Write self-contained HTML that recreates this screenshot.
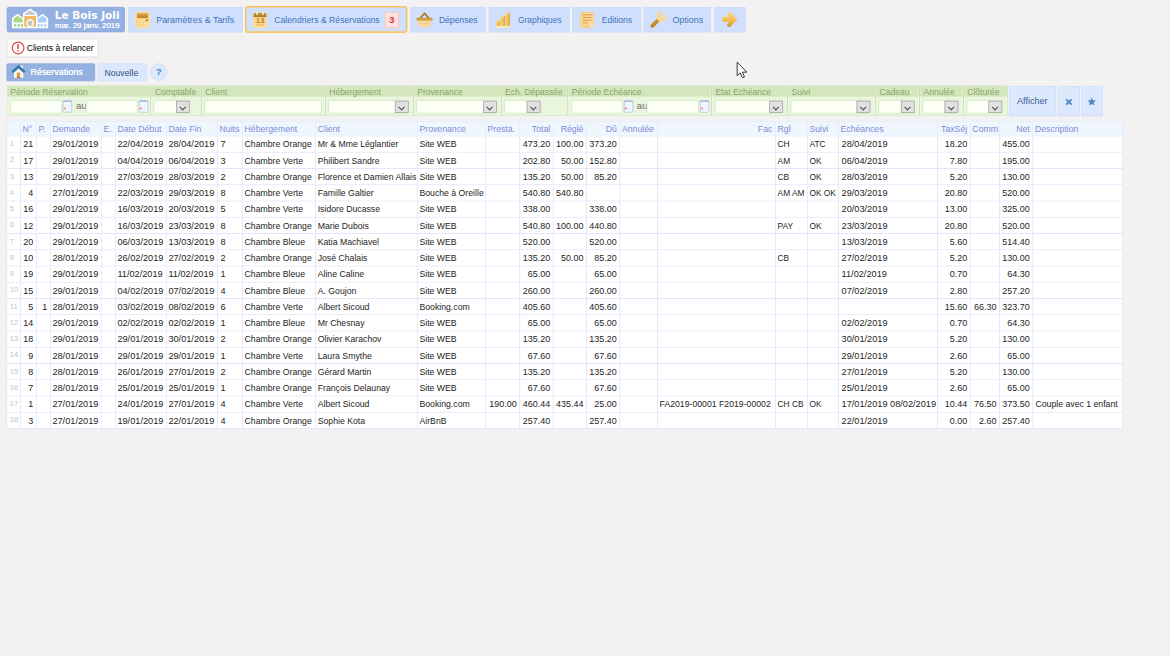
<!DOCTYPE html>
<html lang="fr"><head><meta charset="utf-8"><title>Le Bois Joli - Réservations</title>
<style>
html,body{margin:0;padding:0;width:1170px;height:656px;overflow:hidden}
body{width:1170px;height:656px;overflow:hidden;background:#f3f1f1;font-family:"Liberation Sans",sans-serif;font-size:10.6px;color:#000}
#w{position:absolute;left:0;top:0;width:5760px;height:3228px;transform:scale(0.203125);transform-origin:0 0;background:#f3f1f1}
#z{position:absolute;left:0;top:0;width:5760px;height:3228px}
.a{position:absolute;box-sizing:border-box;white-space:nowrap}
.tb{top:35px;height:124px;background:#d0e0fc;border:4px solid #cadcfa;color:#4272ba;font-size:43.8px;line-height:113.6px}
.tb span{position:absolute;top:3.2px}
.ic{position:absolute;overflow:visible}
.tb .ic{margin-top:-2.6px}
.sel .ic{margin-top:0}
.logo{left:33.2px;top:33.6px;width:582px;height:125.6px;background:#95b1e2;border:4px solid #88a6dc;border-radius:10px;color:#fff}
.sel{border:8px solid #f9c362;border-radius:16px;top:29.2px;height:133.2px;line-height:116.8px}
.fl{top:426.8px;height:56px;line-height:56px;color:#88a468;font-size:42px}
.in{top:492px;height:68px;background:#fbfff6;border:4px solid #d0e7ba;border-radius:12px}
.cb{top:492px;height:68px;background:#fbfff6;border:4px solid #d0e7ba;border-radius:12px}
.cb i{position:absolute;right:-4px;top:0;width:68px;height:60px;box-sizing:border-box;background:#e1e1e1;border:4px solid #a9a9a9}
.cb i:after{content:"";position:absolute;left:17.2px;top:15.6px;width:18.4px;height:18.4px;border-right:5.2px solid #484848;border-bottom:5.2px solid #484848;transform:rotate(45deg)}
.dv{top:424px;width:4px;height:144px;background:#c7ddb2;box-shadow:-4px 0 0 rgba(255,255,255,.3),4px 0 0 rgba(255,255,255,.3)}
.au{top:486.4px;height:68px;line-height:68px;color:#6e686e;font-size:47.2px}
.rb{top:424px;height:148px;background:#dce8fc;border:4px solid #cfe0f8;color:#3a5a94;line-height:140px;text-align:center;font-size:43.2px}
table{position:absolute;left:32px;top:596px;width:5497px;border-collapse:separate;border-spacing:0;table-layout:fixed;border-left:4px solid #e0e0fa;border-top:4px solid #e3edfb}
td,th{box-sizing:border-box;padding:0 12px 0 8px;border-right:4px solid #e0e0fa;border-bottom:4px solid #e0e0fa;overflow:hidden;white-space:nowrap;font-weight:normal;text-align:left}
th{height:72px;background:#f0f6fe;color:#7d8cd6;border-bottom-color:#e2eefb;border-right-color:#e2e9fb;font-size:42.8px;line-height:68px}
td{height:80px;background:#fff;font-size:42.8px;line-height:68px;padding-top:4.8px;vertical-align:top;color:#242424}
td.r,th.r{text-align:right;padding-right:13.6px}
td.r{font-size:44.2px}td.d{font-size:45.2px}
td:nth-child(8){padding-left:12px}td:nth-child(20){padding-left:13.2px}td:nth-child(24){padding-left:10.8px}td:nth-child(18),td:nth-child(19){font-size:41.2px}
td.i{color:#c4c4c4;font-size:38px;line-height:60px;vertical-align:top;padding-left:12px;padding-top:4px}
</style></head><body><div id="w"><div id="z">

<div class="a logo">
<svg class="ic" style="left:20px;top:3.6px" width="184" height="100" viewBox="0 0 46 25">
<path d="M0.5 24.5V12L7.5 6.8L14 11.6V6L22.8 0.3L31.6 6V11.6L38 6.8L45 12V24.5Z" fill="#fff"/>
<path d="M2.6 12.6L7.5 9.2L13.6 13V17.4H2.6Z" fill="#a6d886"/>
<path d="M3.2 19.4h2.6v3.2H3.2zM7.6 19.4h2.6v3.2H7.6zM11.6 19.4h2.4v3.2h-2.4z" fill="#a6d886"/>
<path d="M16 7L22.8 2.4L29.6 7V8H16Z" fill="#c9c9c9"/>
<path d="M15.6 9.6H30v13H15.6z" fill="#f0b85e"/>
<ellipse cx="22.8" cy="18" rx="4.7" ry="5" fill="#fff"/>
<ellipse cx="22.8" cy="18.2" rx="2.9" ry="3.5" fill="#c4c4c4"/>
<path d="M32 13L38 9.2L43 12.6V17.4H32Z" fill="#a9cdfc"/>
<path d="M32 19.4h2.4v3.2H32zM35.8 19.4h2.6v3.2h-2.6zM40.2 19.4h2.6v3.2h-2.6z" fill="#a9cdfc"/>
</svg>
<div class="a" style="left:232px;top:6.4px;font-family:'DejaVu Sans','Liberation Sans',sans-serif;font-weight:bold;font-size:52px;line-height:60px;letter-spacing:0">Le Bois Joli</div>
<div class="a" style="left:234px;top:66px;font-size:39px;line-height:44px;text-shadow:0 0 2.4px #fff;">mar. 29 janv. 2019</div>
</div>
<div class="a tb " style="left:630.8px;width:565.2px"><svg class="ic" style="left:28px;top:20px" width="80" height="84" viewBox="0 0 20 21">
<defs><linearGradient id="g1" x1="0" y1="0" x2="0" y2="1"><stop offset="0" stop-color="#dcaa54"/><stop offset="1" stop-color="#b6822c"/></linearGradient></defs>
<rect x="1.3" y="0.8" width="17" height="19.4" rx="3" fill="#fbd27e" stroke="#fde2a8" stroke-width="1"/>
<rect x="3" y="2.4" width="13.6" height="5.6" rx="1.4" fill="url(#g1)"/>
<g fill="#fdebc2"><rect x="4" y="9.8" width="2" height="2"/><rect x="7.6" y="9.8" width="2" height="2"/><rect x="11.2" y="9.8" width="2" height="2"/>
<rect x="4" y="13.2" width="2" height="2"/><rect x="7.6" y="13.2" width="2" height="2"/><rect x="11.2" y="13.2" width="2" height="2"/><rect x="14.4" y="13.2" width="2" height="2"/>
<rect x="4" y="16.6" width="2" height="2"/><rect x="7.6" y="16.6" width="2" height="2"/><rect x="11.2" y="16.6" width="2" height="2"/><rect x="14.4" y="16.6" width="2" height="2"/></g>
<rect x="13.4" y="9.6" width="3" height="2.4" rx="0.8" fill="#b98630"/>
</svg><span style="left:134.4px">Paramètres &amp; Tarifs</span></div>
<div class="a tb sel" style="left:1206.4px;width:800px"><svg class="ic" style="left:24px;top:16px" width="80" height="88" viewBox="0 0 20 22">
<rect x="2.4" y="2.6" width="16.2" height="18.2" rx="2.6" fill="#fcd88c" stroke="#fde4b0" stroke-width="0.8"/>
<path d="M2.4 7.2V5.2Q2.4 2.6 5 2.6H16Q18.6 2.6 18.6 5.2V7.2Z" fill="#b98a30"/>
<rect x="2.4" y="6.2" width="16.2" height="1.5" fill="#a87a24"/>
<rect x="5.6" y="0.6" width="2.4" height="4.6" rx="1.1" fill="#fde6b4"/><rect x="13" y="0.6" width="2.4" height="4.6" rx="1.1" fill="#fde6b4"/>
<text x="5.5" y="15.5" font-family="Liberation Sans,sans-serif" font-weight="bold" font-size="8.6" fill="#b07c22" letter-spacing="0.9">13</text>
<rect x="5.6" y="16.8" width="10" height="1.2" fill="#e2b866"/>
</svg><span style="left:136px;font-size:42.6px">Calendriers &amp; Réservations</span><b class="a" style="left:678.4px;top:21.2px;width:72px;height:80px;background:#fde0e0;border:4px solid #f6c0b8;border-radius:8px;color:#e03232;font-weight:bold;font-size:46px;line-height:72px;text-align:center">3</b></div>
<div class="a tb " style="left:2020px;width:372px"><svg class="ic" style="left:22px;top:21.6px" width="88" height="80" viewBox="0 0 22 20">
<path d="M5 8.6L11 2L17 8.6" fill="none" stroke="#a87422" stroke-width="2.1" stroke-linejoin="round" stroke-linecap="round"/>
<path d="M2.4 10.6H19.6L18.2 17.6Q18 19 16.6 19H5.4Q4 19 3.8 17.6Z" fill="#f9d69c"/>
<rect x="1" y="7.4" width="20" height="3.6" rx="1.8" fill="#c9983c"/>
<rect x="2.4" y="9.6" width="17.2" height="1.4" fill="#e2b662"/>
<rect x="4.4" y="13.8" width="13.2" height="0.9" fill="#f4c886"/>
</svg><span style="left:136.8px;font-size:42.2px">Dépenses</span></div>
<div class="a tb " style="left:2406.4px;width:397.6px"><svg class="ic" style="left:28px;top:24px" width="80" height="80" viewBox="0 0 20 20">
<defs><linearGradient id="g2" x1="0" y1="0" x2="1" y2="0"><stop offset="0" stop-color="#fbd070"/><stop offset="0.6" stop-color="#f4bc50"/><stop offset="1" stop-color="#d89c30"/></linearGradient></defs>
<rect x="0.4" y="16.6" width="18.6" height="2.4" fill="#fcecb0"/>
<rect x="1" y="10" width="5.2" height="7" rx="1.6" fill="url(#g2)"/>
<rect x="6.8" y="4.6" width="5.2" height="12.4" rx="1.6" fill="url(#g2)"/>
<rect x="12.6" y="0.4" width="5.4" height="16.6" rx="1.6" fill="url(#g2)"/>
<rect x="13.6" y="1" width="3.4" height="1.8" rx="0.9" fill="#fde4a0"/>
<rect x="7.8" y="5.2" width="3.2" height="1.6" rx="0.8" fill="#fde4a0"/>
<rect x="2" y="10.6" width="3.2" height="1.6" rx="0.8" fill="#fde4a0"/>
</svg><span style="left:139.2px;font-size:41.8px">Graphiques</span></div>
<div class="a tb " style="left:2816px;width:340px"><svg class="ic" style="left:32px;top:20px" width="80" height="84" viewBox="0 0 20 21">
<path d="M4 1.2H15.2Q17.4 1.2 17.4 3.4V16.8L14.2 20.2H4Q1.8 20.2 1.8 18V3.4Q1.8 1.2 4 1.2Z" fill="#fcdaa0" stroke="#f8c674" stroke-width="1"/>
<path d="M14.2 20.2V18Q14.2 16.8 15.6 16.8H17.4Z" fill="#fff4dc"/>
<g fill="#dca648"><rect x="3.8" y="3.4" width="11.4" height="1.5"/><rect x="3.8" y="6.8" width="11.4" height="1.5"/><rect x="3.8" y="10.2" width="11.4" height="1.5"/><rect x="3.8" y="13.4" width="6.6" height="1.5"/></g>
<rect x="3.8" y="17.2" width="9" height="1.2" fill="#f6c87a"/>
</svg><span style="left:142.4px;font-size:42px">Editions</span></div>
<div class="a tb " style="left:3168px;width:332px"><svg class="ic" style="left:0;top:0" width="144" height="120" viewBox="0 0 36 30">
<path d="M9.9 22.9L16.6 16.2" stroke="#be8822" stroke-width="4.6" stroke-linecap="round"/>
<path d="M11 21.6L15.4 17.2" stroke="#cf9a34" stroke-width="1.2" stroke-linecap="round"/>
<path d="M15.4 14.8L18 17.4L20 15.4L17.4 12.8Z" fill="#f6cc80"/>
<circle cx="20.9" cy="11.6" r="5.9" fill="#fbd68e"/>
<rect x="-1.9" y="-9.5" width="3.8" height="10.3" rx="1.7" transform="translate(21.1,11.4) rotate(45)" fill="#d0e0fc"/>
</svg><span style="left:138.4px">Options</span></div>
<div class="a tb " style="left:3516px;width:154px"><svg class="ic" style="left:32px;top:21.6px" width="80" height="80" viewBox="0 0 20 20">
<defs><linearGradient id="g3" x1="0" y1="0" x2="0" y2="1"><stop offset="0" stop-color="#fbd47c"/><stop offset="0.5" stop-color="#f5c258"/><stop offset="1" stop-color="#d2962a"/></linearGradient></defs>
<path d="M10.8 1.2Q9.2 -0.4 7.6 1.2T7.6 4.4L9.2 6H3.2Q0.6 6 0.6 9.3T3.2 12.6H9.2L7.4 14.6Q5.8 16.4 7.6 18T11 18L18.6 10.4Q19.6 9.3 18.6 8.2Z" fill="url(#g3)"/>
</svg><span style="left:0px"></span></div>
<svg class="ic" style="left:3625.2px;top:301.6px" width="60" height="92" viewBox="0 0 15 23"><path d="M1 1V17.6L4.8 14.2L7.5 20.2L10 19.2L7.4 13.3H12.9Z" fill="#fff" stroke="#222" stroke-width="1.1" stroke-linejoin="miter"/></svg>
<div class="a" style="left:32.8px;top:189.6px;width:452px;height:92px;background:#fff;border:4px solid #dfdddd;border-radius:8px;font-size:42.4px;line-height:80px">
<svg class="ic" style="left:18.4px;top:8.8px" width="68" height="68" viewBox="0 0 17 17"><circle cx="8.5" cy="8.5" r="7.2" fill="#fff" stroke="#de4a44" stroke-width="1.5"/><rect x="7.5" y="3.8" width="2" height="6" rx="0.6" fill="#de4a44"/><rect x="7.5" y="11" width="2" height="2" rx="0.6" fill="#de4a44"/></svg>
<span class="a" style="left:94.8px;top:5.6px">Clients à relancer</span></div>
<div class="a" style="left:32px;top:312px;width:436px;height:88px;background:#95b1e2;border:4px solid #8aa8de;border-radius:8px;color:#fff;font-size:44px;line-height:80px;text-shadow:0 0 2px #fff">
<svg class="ic" style="left:20px;top:4px" width="72" height="68" viewBox="0 0 18 17">
<rect x="11.6" y="0.6" width="2.6" height="4" fill="#f4f4f4"/>
<path d="M3.2 8.4L8.8 3.4L14.8 8.4V15.8H3.2Z" fill="#f6f6f4"/>
<path d="M0.6 7.6L8.8 0.4L17 7.6L15.4 9.5L8.8 4L2.2 9.5Z" fill="#2e7eb8" stroke="#2c4868" stroke-width="0.5"/>
<rect x="6.8" y="9.4" width="4" height="6.4" fill="#d89a28"/><rect x="6.8" y="15" width="4" height="0.9" fill="#d04028"/>
</svg>
<span class="a" style="left:114px;top:0px">Réservations</span></div>
<div class="a" style="left:480px;top:312px;width:244px;height:88px;background:#dce8fc;border:4px solid #cfe0f8;border-radius:8px;color:#31507f;font-size:42.8px;line-height:88px"><span class="a" style="left:30px;top:0px">Nouvelle</span></div>
<div class="a" style="left:738px;top:312px;width:86px;height:86px;background:#dce8fc;border:4px solid #cbdcf6;border-radius:44px;color:#4a82c4;font-weight:bold;font-size:48px;line-height:76px;text-align:center">?</div>
<div class="a" style="left:32px;top:420px;width:4930px;height:152px;background:#e9f5dd;border:4px solid #cfe4ba;border-top-color:#c4dab2;border-radius:8px"></div>
<div class="a" style="left:36px;top:424px;width:4922px;height:49.6px;background:#d4e7bc;border-bottom:4px solid #c9e0b0"></div>
<div class="a dv" style="left:738.4px"></div>
<div class="a dv" style="left:988.8px"></div>
<div class="a dv" style="left:1600.4px"></div>
<div class="a dv" style="left:2033.2px"></div>
<div class="a dv" style="left:2465.6px"></div>
<div class="a dv" style="left:2792.8px"></div>
<div class="a dv" style="left:3500.4px"></div>
<div class="a dv" style="left:3874.8px"></div>
<div class="a dv" style="left:4308.8px"></div>
<div class="a dv" style="left:4525.2px"></div>
<div class="a dv" style="left:4741.2px"></div>
<div class="a fl" style="left:51.6px">Période Réservation</div>
<div class="a fl" style="left:762.8px">Comptable</div>
<div class="a fl" style="left:1010.8px">Client</div>
<div class="a fl" style="left:1620.8px">Hébergement</div>
<div class="a fl" style="left:2054.4px">Provenance</div>
<div class="a fl" style="left:2486px">Ech. Dépassée</div>
<div class="a fl" style="left:2815.2px">Période Echéance</div>
<div class="a fl" style="left:3522px">Etat Echéance</div>
<div class="a fl" style="left:3897.2px">Suivi</div>
<div class="a fl" style="left:4330px">Cadeau</div>
<div class="a fl" style="left:4546.4px">Annulée</div>
<div class="a fl" style="left:4762px">Clôturée</div>
<div class="a in" style="left:50.8px;width:256px"></div>
<svg class="ic" style="left:308.2px;top:492px" width="48" height="64" viewBox="0 0 12 16"><rect x="0.6" y="0.8" width="10.6" height="14.2" rx="0.8" fill="#fff" stroke="#aec6ea" stroke-width="1.1"/><rect x="0.6" y="0.8" width="10.6" height="2" fill="#a9c3e8"/><path d="M4.1 3.4V14.6M7.6 3.4V14.6M1 6.2H11M1 9H11M1 11.8H11" stroke="#dde6f4" stroke-width="0.8"/><rect x="1.4" y="9.2" width="2.4" height="2.4" fill="#f2907c"/></svg>
<div class="a au" style="left:373.68px">au</div>
<div class="a in" style="left:422px;width:255.6px"></div>
<svg class="ic" style="left:683.32px;top:492px" width="48" height="64" viewBox="0 0 12 16"><rect x="0.6" y="0.8" width="10.6" height="14.2" rx="0.8" fill="#fff" stroke="#aec6ea" stroke-width="1.1"/><rect x="0.6" y="0.8" width="10.6" height="2" fill="#a9c3e8"/><path d="M4.1 3.4V14.6M7.6 3.4V14.6M1 6.2H11M1 9H11M1 11.8H11" stroke="#dde6f4" stroke-width="0.8"/><rect x="1.4" y="9.2" width="2.4" height="2.4" fill="#f2907c"/></svg>
<div class="a cb" style="left:755.6px;width:179.6px"><i></i></div>
<div class="a in" style="left:1005.6px;width:579.6px"></div>
<div class="a cb" style="left:1614.8px;width:396.8px"><i></i></div>
<div class="a cb" style="left:2048.4px;width:397.2px"><i></i></div>
<div class="a cb" style="left:2481.2px;width:180px"><i></i></div>
<div class="a in" style="left:2812px;width:256.4px"></div>
<svg class="ic" style="left:3070.52px;top:492px" width="48" height="64" viewBox="0 0 12 16"><rect x="0.6" y="0.8" width="10.6" height="14.2" rx="0.8" fill="#fff" stroke="#aec6ea" stroke-width="1.1"/><rect x="0.6" y="0.8" width="10.6" height="2" fill="#a9c3e8"/><path d="M4.1 3.4V14.6M7.6 3.4V14.6M1 6.2H11M1 9H11M1 11.8H11" stroke="#dde6f4" stroke-width="0.8"/><rect x="1.4" y="9.2" width="2.4" height="2.4" fill="#f2907c"/></svg>
<div class="a au" style="left:3135px">au</div>
<div class="a in" style="left:3183.2px;width:257.6px"></div>
<svg class="ic" style="left:3445.16px;top:492px" width="48" height="64" viewBox="0 0 12 16"><rect x="0.6" y="0.8" width="10.6" height="14.2" rx="0.8" fill="#fff" stroke="#aec6ea" stroke-width="1.1"/><rect x="0.6" y="0.8" width="10.6" height="2" fill="#a9c3e8"/><path d="M4.1 3.4V14.6M7.6 3.4V14.6M1 6.2H11M1 9H11M1 11.8H11" stroke="#dde6f4" stroke-width="0.8"/><rect x="1.4" y="9.2" width="2.4" height="2.4" fill="#f2907c"/></svg>
<div class="a cb" style="left:3518px;width:336.8px"><i></i></div>
<div class="a cb" style="left:3891.6px;width:393.2px"><i></i></div>
<div class="a cb" style="left:4324px;width:178.8px"><i></i></div>
<div class="a cb" style="left:4541.2px;width:176.8px"><i></i></div>
<div class="a cb" style="left:4758px;width:175.6px"><i></i></div>
<div class="a rb" style="left:4968px;width:232px;font-size:44.4px;text-indent:-4px">Afficher</div>
<div class="a rb" style="left:5210px;width:106px"><svg class="ic" style="left:32px;top:58px" width="32" height="32" viewBox="0 0 8 8"><path d="M1.3 1.5L6.7 6.5M6.7 1.5L1.3 6.5" stroke="#4f88c8" stroke-width="2.3" stroke-linecap="round"/></svg></div>
<div class="a rb" style="left:5324px;width:104px"><svg class="ic" style="left:26.4px;top:51.2px" width="41.6" height="41.6" viewBox="0 0 11 11"><path d="M5.5 0.3L7.1 3.8L10.9 4.2L8.1 6.8L8.9 10.6L5.5 8.6L2.1 10.6L2.9 6.8L0.1 4.2L3.9 3.8Z" fill="#4f88c8"/></svg></div>
<table><colgroup>
<col style="width:67px">
<col style="width:78px">
<col style="width:69px">
<col style="width:251px">
<col style="width:69px">
<col style="width:251px">
<col style="width:252px">
<col style="width:123px">
<col style="width:360px">
<col style="width:501px">
<col style="width:335px">
<col style="width:169px">
<col style="width:165px">
<col style="width:164px">
<col style="width:164px">
<col style="width:185px">
<col style="width:581px">
<col style="width:157px">
<col style="width:153px">
<col style="width:488px">
<col style="width:161px">
<col style="width:144px">
<col style="width:164px">
<col style="width:442px">
</colgroup><thead><tr>
<th class="i"></th>
<th class="t">N°</th>
<th class="t">P.</th>
<th class="t">Demande</th>
<th class="t">E.</th>
<th class="t">Date Début</th>
<th class="t">Date Fin</th>
<th class="t">Nuits</th>
<th class="t">Hébergement</th>
<th class="t">Client</th>
<th class="t">Provenance</th>
<th class="t">Presta.</th>
<th class="r">Total</th>
<th class="r">Réglé</th>
<th class="r">Dû</th>
<th class="t">Annulée</th>
<th class="r">Fac</th>
<th class="t">Rgl</th>
<th class="t">Suivi</th>
<th class="t">Echéances</th>
<th class="r">TaxSéj</th>
<th class="t">Comm</th>
<th class="r">Net</th>
<th class="t">Description</th>
</tr></thead><tbody>
<tr><td class="i">1</td><td class="r">21</td><td class="r"></td><td class="d">29/01/2019</td><td class="t"></td><td class="d">22/04/2019</td><td class="d">28/04/2019</td><td class="d">7</td><td class="t">Chambre Orange</td><td class="t">Mr &amp; Mme Léglantier</td><td class="t">Site WEB</td><td class="r"></td><td class="r">473.20</td><td class="r">100.00</td><td class="r">373.20</td><td class="t"></td><td class="t"></td><td class="t">CH</td><td class="t">ATC</td><td class="d">28/04/2019</td><td class="r">18.20</td><td class="r"></td><td class="r">455.00</td><td class="t"></td></tr>
<tr><td class="i">2</td><td class="r">17</td><td class="r"></td><td class="d">29/01/2019</td><td class="t"></td><td class="d">04/04/2019</td><td class="d">06/04/2019</td><td class="d">3</td><td class="t">Chambre Verte</td><td class="t">Philibert Sandre</td><td class="t">Site WEB</td><td class="r"></td><td class="r">202.80</td><td class="r">50.00</td><td class="r">152.80</td><td class="t"></td><td class="t"></td><td class="t">AM</td><td class="t">OK</td><td class="d">06/04/2019</td><td class="r">7.80</td><td class="r"></td><td class="r">195.00</td><td class="t"></td></tr>
<tr><td class="i">3</td><td class="r">13</td><td class="r"></td><td class="d">29/01/2019</td><td class="t"></td><td class="d">27/03/2019</td><td class="d">28/03/2019</td><td class="d">2</td><td class="t">Chambre Orange</td><td class="t">Florence et Damien Allais</td><td class="t">Site WEB</td><td class="r"></td><td class="r">135.20</td><td class="r">50.00</td><td class="r">85.20</td><td class="t"></td><td class="t"></td><td class="t">CB</td><td class="t">OK</td><td class="d">28/03/2019</td><td class="r">5.20</td><td class="r"></td><td class="r">130.00</td><td class="t"></td></tr>
<tr><td class="i">4</td><td class="r">4</td><td class="r"></td><td class="d">27/01/2019</td><td class="t"></td><td class="d">22/03/2019</td><td class="d">29/03/2019</td><td class="d">8</td><td class="t">Chambre Verte</td><td class="t">Famille Galtier</td><td class="t">Bouche à Oreille</td><td class="r"></td><td class="r">540.80</td><td class="r">540.80</td><td class="r"></td><td class="t"></td><td class="t"></td><td class="t">AM AM</td><td class="t">OK OK</td><td class="d">29/03/2019</td><td class="r">20.80</td><td class="r"></td><td class="r">520.00</td><td class="t"></td></tr>
<tr><td class="i">5</td><td class="r">16</td><td class="r"></td><td class="d">29/01/2019</td><td class="t"></td><td class="d">16/03/2019</td><td class="d">20/03/2019</td><td class="d">5</td><td class="t">Chambre Verte</td><td class="t">Isidore Ducasse</td><td class="t">Site WEB</td><td class="r"></td><td class="r">338.00</td><td class="r"></td><td class="r">338.00</td><td class="t"></td><td class="t"></td><td class="t"></td><td class="t"></td><td class="d">20/03/2019</td><td class="r">13.00</td><td class="r"></td><td class="r">325.00</td><td class="t"></td></tr>
<tr><td class="i">6</td><td class="r">12</td><td class="r"></td><td class="d">29/01/2019</td><td class="t"></td><td class="d">16/03/2019</td><td class="d">23/03/2019</td><td class="d">8</td><td class="t">Chambre Orange</td><td class="t">Marie Dubois</td><td class="t">Site WEB</td><td class="r"></td><td class="r">540.80</td><td class="r">100.00</td><td class="r">440.80</td><td class="t"></td><td class="t"></td><td class="t">PAY</td><td class="t">OK</td><td class="d">23/03/2019</td><td class="r">20.80</td><td class="r"></td><td class="r">520.00</td><td class="t"></td></tr>
<tr><td class="i">7</td><td class="r">20</td><td class="r"></td><td class="d">29/01/2019</td><td class="t"></td><td class="d">06/03/2019</td><td class="d">13/03/2019</td><td class="d">8</td><td class="t">Chambre Bleue</td><td class="t">Katia Machiavel</td><td class="t">Site WEB</td><td class="r"></td><td class="r">520.00</td><td class="r"></td><td class="r">520.00</td><td class="t"></td><td class="t"></td><td class="t"></td><td class="t"></td><td class="d">13/03/2019</td><td class="r">5.60</td><td class="r"></td><td class="r">514.40</td><td class="t"></td></tr>
<tr><td class="i">8</td><td class="r">10</td><td class="r"></td><td class="d">28/01/2019</td><td class="t"></td><td class="d">26/02/2019</td><td class="d">27/02/2019</td><td class="d">2</td><td class="t">Chambre Orange</td><td class="t">José Chalais</td><td class="t">Site WEB</td><td class="r"></td><td class="r">135.20</td><td class="r">50.00</td><td class="r">85.20</td><td class="t"></td><td class="t"></td><td class="t">CB</td><td class="t"></td><td class="d">27/02/2019</td><td class="r">5.20</td><td class="r"></td><td class="r">130.00</td><td class="t"></td></tr>
<tr><td class="i">9</td><td class="r">19</td><td class="r"></td><td class="d">29/01/2019</td><td class="t"></td><td class="d">11/02/2019</td><td class="d">11/02/2019</td><td class="d">1</td><td class="t">Chambre Bleue</td><td class="t">Aline Caline</td><td class="t">Site WEB</td><td class="r"></td><td class="r">65.00</td><td class="r"></td><td class="r">65.00</td><td class="t"></td><td class="t"></td><td class="t"></td><td class="t"></td><td class="d">11/02/2019</td><td class="r">0.70</td><td class="r"></td><td class="r">64.30</td><td class="t"></td></tr>
<tr><td class="i">10</td><td class="r">15</td><td class="r"></td><td class="d">29/01/2019</td><td class="t"></td><td class="d">04/02/2019</td><td class="d">07/02/2019</td><td class="d">4</td><td class="t">Chambre Bleue</td><td class="t">A. Goujon</td><td class="t">Site WEB</td><td class="r"></td><td class="r">260.00</td><td class="r"></td><td class="r">260.00</td><td class="t"></td><td class="t"></td><td class="t"></td><td class="t"></td><td class="d">07/02/2019</td><td class="r">2.80</td><td class="r"></td><td class="r">257.20</td><td class="t"></td></tr>
<tr><td class="i">11</td><td class="r">5</td><td class="r">1</td><td class="d">28/01/2019</td><td class="t"></td><td class="d">03/02/2019</td><td class="d">08/02/2019</td><td class="d">6</td><td class="t">Chambre Verte</td><td class="t">Albert Sicoud</td><td class="t">Booking.com</td><td class="r"></td><td class="r">405.60</td><td class="r"></td><td class="r">405.60</td><td class="t"></td><td class="t"></td><td class="t"></td><td class="t"></td><td class="d"></td><td class="r">15.60</td><td class="r">66.30</td><td class="r">323.70</td><td class="t"></td></tr>
<tr><td class="i">12</td><td class="r">14</td><td class="r"></td><td class="d">29/01/2019</td><td class="t"></td><td class="d">02/02/2019</td><td class="d">02/02/2019</td><td class="d">1</td><td class="t">Chambre Bleue</td><td class="t">Mr Chesnay</td><td class="t">Site WEB</td><td class="r"></td><td class="r">65.00</td><td class="r"></td><td class="r">65.00</td><td class="t"></td><td class="t"></td><td class="t"></td><td class="t"></td><td class="d">02/02/2019</td><td class="r">0.70</td><td class="r"></td><td class="r">64.30</td><td class="t"></td></tr>
<tr><td class="i">13</td><td class="r">18</td><td class="r"></td><td class="d">29/01/2019</td><td class="t"></td><td class="d">29/01/2019</td><td class="d">30/01/2019</td><td class="d">2</td><td class="t">Chambre Orange</td><td class="t">Olivier Karachov</td><td class="t">Site WEB</td><td class="r"></td><td class="r">135.20</td><td class="r"></td><td class="r">135.20</td><td class="t"></td><td class="t"></td><td class="t"></td><td class="t"></td><td class="d">30/01/2019</td><td class="r">5.20</td><td class="r"></td><td class="r">130.00</td><td class="t"></td></tr>
<tr><td class="i">14</td><td class="r">9</td><td class="r"></td><td class="d">28/01/2019</td><td class="t"></td><td class="d">29/01/2019</td><td class="d">29/01/2019</td><td class="d">1</td><td class="t">Chambre Verte</td><td class="t">Laura Smythe</td><td class="t">Site WEB</td><td class="r"></td><td class="r">67.60</td><td class="r"></td><td class="r">67.60</td><td class="t"></td><td class="t"></td><td class="t"></td><td class="t"></td><td class="d">29/01/2019</td><td class="r">2.60</td><td class="r"></td><td class="r">65.00</td><td class="t"></td></tr>
<tr><td class="i">15</td><td class="r">8</td><td class="r"></td><td class="d">28/01/2019</td><td class="t"></td><td class="d">26/01/2019</td><td class="d">27/01/2019</td><td class="d">2</td><td class="t">Chambre Orange</td><td class="t">Gérard Martin</td><td class="t">Site WEB</td><td class="r"></td><td class="r">135.20</td><td class="r"></td><td class="r">135.20</td><td class="t"></td><td class="t"></td><td class="t"></td><td class="t"></td><td class="d">27/01/2019</td><td class="r">5.20</td><td class="r"></td><td class="r">130.00</td><td class="t"></td></tr>
<tr><td class="i">16</td><td class="r">7</td><td class="r"></td><td class="d">28/01/2019</td><td class="t"></td><td class="d">25/01/2019</td><td class="d">25/01/2019</td><td class="d">1</td><td class="t">Chambre Orange</td><td class="t">François Delaunay</td><td class="t">Site WEB</td><td class="r"></td><td class="r">67.60</td><td class="r"></td><td class="r">67.60</td><td class="t"></td><td class="t"></td><td class="t"></td><td class="t"></td><td class="d">25/01/2019</td><td class="r">2.60</td><td class="r"></td><td class="r">65.00</td><td class="t"></td></tr>
<tr><td class="i">17</td><td class="r">1</td><td class="r"></td><td class="d">27/01/2019</td><td class="t"></td><td class="d">24/01/2019</td><td class="d">27/01/2019</td><td class="d">4</td><td class="t">Chambre Verte</td><td class="t">Albert Sicoud</td><td class="t">Booking.com</td><td class="r">190.00</td><td class="r">460.44</td><td class="r">435.44</td><td class="r">25.00</td><td class="t"></td><td class="t">FA2019-00001 F2019-00002</td><td class="t">CH CB</td><td class="t">OK</td><td class="d">17/01/2019 08/02/2019</td><td class="r">10.44</td><td class="r">76.50</td><td class="r">373.50</td><td class="t">Couple avec 1 enfant</td></tr>
<tr><td class="i">18</td><td class="r">3</td><td class="r"></td><td class="d">27/01/2019</td><td class="t"></td><td class="d">19/01/2019</td><td class="d">22/01/2019</td><td class="d">4</td><td class="t">Chambre Orange</td><td class="t">Sophie Kota</td><td class="t">AirBnB</td><td class="r"></td><td class="r">257.40</td><td class="r"></td><td class="r">257.40</td><td class="t"></td><td class="t"></td><td class="t"></td><td class="t"></td><td class="d">22/01/2019</td><td class="r">0.00</td><td class="r">2.60</td><td class="r">257.40</td><td class="t"></td></tr>
</tbody></table>
</div></div></body></html>
